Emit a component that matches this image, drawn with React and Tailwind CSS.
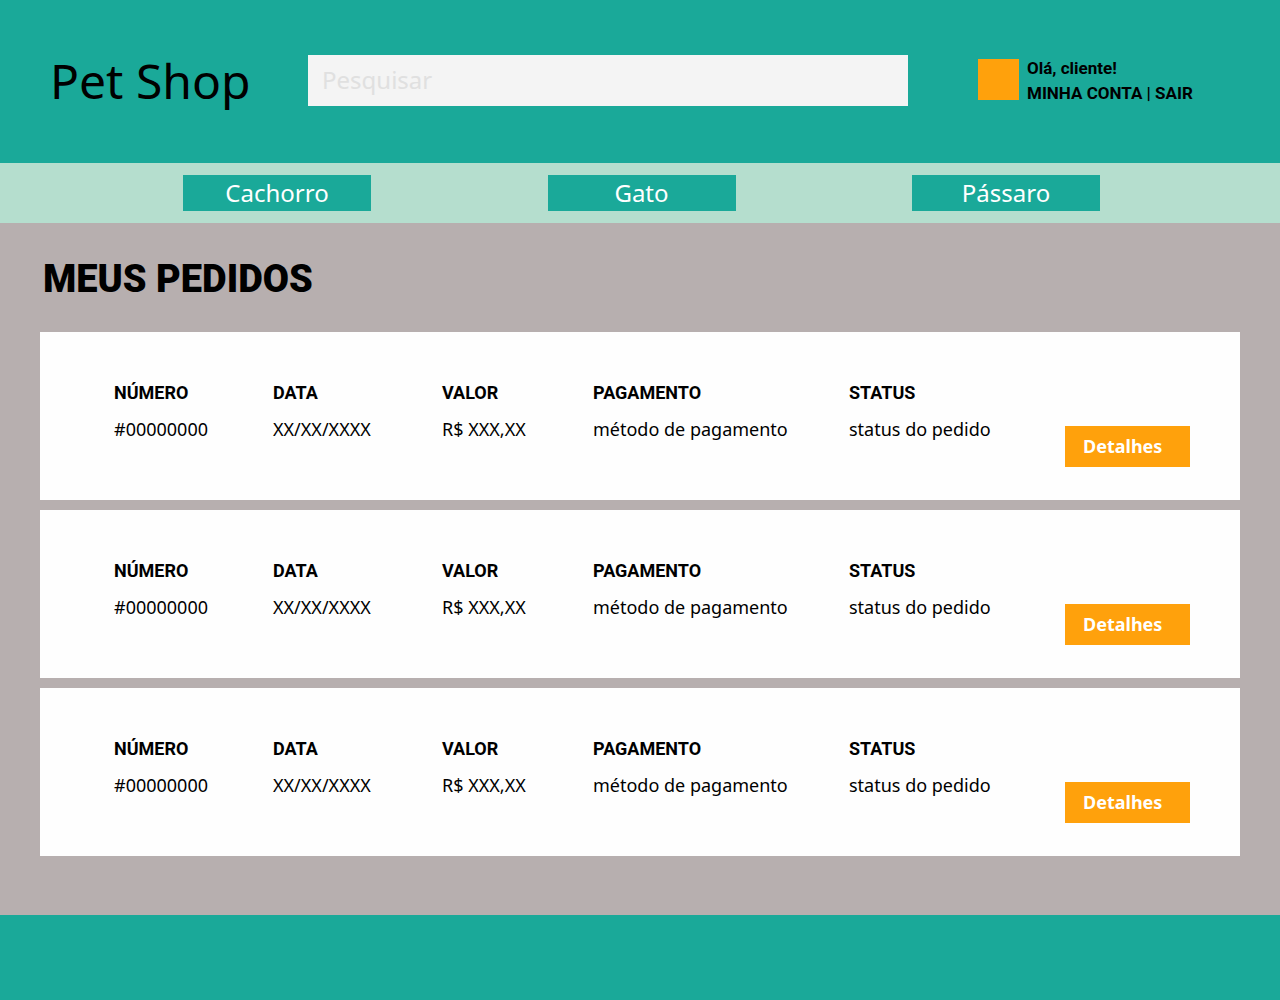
const categories = ['Cachorro', 'Gato', 'Pássaro'];

const orders = [1, 2, 3].map((id) => ({
  id,
  number: '#00000000',
  date: 'XX/XX/XXXX',
  value: 'R$ XXX,XX',
  payment: 'método de pagamento',
  status: 'status do pedido',
}));

function Header() {
  return (
    <header className="flex h-[163px] items-start bg-[#1aa999] pt-[55px]">
      <div className="w-[308px] shrink-0 pl-[50px] text-[48px] leading-[52px] whitespace-nowrap">
        Pet Shop
      </div>
      <input
        type="search"
        aria-label="Pesquisar"
        placeholder="Pesquisar"
        className="h-[51px] min-w-0 flex-1 bg-[#f4f4f4] px-[14px] pb-[2px] text-[24px] outline-none placeholder:text-[#e0e0e0]"
      />
      <div className="ml-[70px] flex w-[302px] shrink-0 items-start gap-2 pt-px">
        <div className="mt-[3px] size-[41px] bg-[#ffa10c]" />
        <div className="font-['Roboto',sans-serif] text-[17px] leading-[25px] font-bold whitespace-nowrap">
          <p>Olá, cliente!</p>
          <p>
            <a href="#conta">MINHA CONTA</a> | <a href="#sair">SAIR</a>
          </p>
        </div>
      </div>
    </header>
  );
}

function OrderCard({ order }) {
  return (
    <li className="flex items-end bg-[#fefefe] pt-[42px] pr-[50px] pb-[33px] pl-[74px]">
      <table className="min-w-0 flex-1 table-fixed self-start text-left text-[18px] leading-[37px] whitespace-nowrap">
        <colgroup>
          <col className="w-[159px]" />
          <col className="w-[169px]" />
          <col className="w-[151px]" />
          <col className="w-[256px]" />
          <col />
        </colgroup>
        <thead className="font-['Roboto',sans-serif]">
          <tr>
            <th className="font-bold">NÚMERO</th>
            <th className="font-bold">DATA</th>
            <th className="font-bold">VALOR</th>
            <th className="font-bold">PAGAMENTO</th>
            <th className="font-bold">STATUS</th>
          </tr>
        </thead>
        <tbody>
          <tr>
            <td>{order.number}</td>
            <td>{order.date}</td>
            <td>{order.value}</td>
            <td>{order.payment}</td>
            <td>{order.status}</td>
          </tr>
        </tbody>
      </table>
      <button
        type="button"
        className="mt-[52px] h-[41px] w-[125px] shrink-0 bg-[#ffa10c] pl-[18px] text-left text-[18px] font-bold text-white"
      >
        Detalhes
      </button>
    </li>
  );
}

export default function App() {
  return (
    <div className="flex min-h-screen flex-col bg-[#b7afaf] font-['Noto_Sans',sans-serif] text-black">
      <Header />
      <nav className="flex justify-between bg-[#b5dece] py-3 pr-[180px] pl-[183px]">
        {categories.map((name) => (
          <a
            key={name}
            href="#categoria"
            className="w-[188px] bg-[#1aa999] text-center text-[24px] leading-[36px] text-white"
          >
            {name}
          </a>
        ))}
      </nav>
      <main className="flex-1 px-10 pt-8 pb-[59px]">
        <h1 className="pl-[3px] font-['Roboto',sans-serif] text-[38px] leading-[48px] font-black">
          MEUS PEDIDOS
        </h1>
        <ul className="mt-[29px] flex flex-col gap-[10px]">
          {orders.map((order) => (
            <OrderCard key={order.id} order={order} />
          ))}
        </ul>
      </main>
      <footer className="h-[85px] bg-[#1aa999]" />
    </div>
  );
}
